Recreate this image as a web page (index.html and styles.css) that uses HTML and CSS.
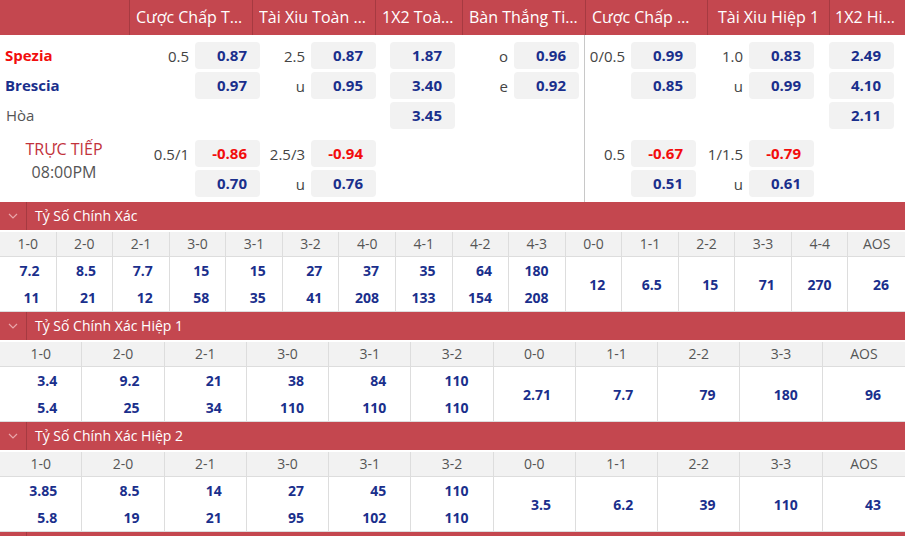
FILE: index.html
```html
<!DOCTYPE html>
<html lang="vi">
<head>
<meta charset="utf-8">
<title>Spezia vs Brescia</title>
<link rel="stylesheet" href="styles.css">
</head>
<body>
<div class="page">
  <div class="mhead">
    <div class="hc hc0"></div>
    <div class="hc hc1"><span>Cược Chấp Toàn Trận</span></div>
    <div class="hc hc2"><span>Tài Xiu Toàn Trận</span></div>
    <div class="hc hc3"><span>1X2 Toàn Trận</span></div>
    <div class="hc hc4"><span>Bàn Thắng Tiếp Theo</span></div>
    <div class="hc hc5"><span>Cược Chấp Hiệp 1</span></div>
    <div class="hc hc6"><span>Tài Xiu Hiệp 1</span></div>
    <div class="hc hc7"><span>1X2 Hiệp 1</span></div>
  </div>

  <div class="mbody">
    <div class="half left">
      <div class="team home">Spezia</div>
      <div class="cell g1"><span class="lbl">0.5</span><span class="odd">0.87</span></div>
      <div class="cell g2"><span class="lbl">2.5</span><span class="odd">0.87</span></div>
      <div class="cell g3"><span class="odd">1.87</span></div>
      <div class="cell g4"><span class="lbl">o</span><span class="odd">0.96</span></div>

      <div class="team away">Brescia</div>
      <div class="cell g1"><span class="odd">0.97</span></div>
      <div class="cell g2"><span class="lbl">u</span><span class="odd">0.95</span></div>
      <div class="cell g3"><span class="odd">3.40</span></div>
      <div class="cell g4"><span class="lbl">e</span><span class="odd">0.92</span></div>

      <div class="team draw">Hòa</div>
      <div class="cell g1"></div>
      <div class="cell g2"></div>
      <div class="cell g3"><span class="odd">3.45</span></div>
      <div class="cell g4"></div>

      <div class="live"><div class="livetag">TRỰC TIẾP</div><div class="livetime">08:00PM</div></div>
      <div class="cell g1 r4"><span class="lbl">0.5/1</span><span class="odd neg">-0.86</span></div>
      <div class="cell g2 r4"><span class="lbl">2.5/3</span><span class="odd neg">-0.94</span></div>
      <div class="cell g3 r4"></div>
      <div class="cell g4 r4"></div>

      <div class="cell g1"><span class="odd">0.70</span></div>
      <div class="cell g2"><span class="lbl">u</span><span class="odd">0.76</span></div>
      <div class="cell g3"></div>
      <div class="cell g4"></div>
    </div>

    <div class="half right">
      <div class="cell g5"><span class="lbl">0/0.5</span><span class="odd">0.99</span></div>
      <div class="cell g6"><span class="lbl">1.0</span><span class="odd">0.83</span></div>
      <div class="cell g7"><span class="odd">2.49</span></div>

      <div class="cell g5"><span class="odd">0.85</span></div>
      <div class="cell g6"><span class="lbl">u</span><span class="odd">0.99</span></div>
      <div class="cell g7"><span class="odd">4.10</span></div>

      <div class="cell g5"></div>
      <div class="cell g6"></div>
      <div class="cell g7"><span class="odd">2.11</span></div>

      <div class="cell g5 r4"><span class="lbl">0.5</span><span class="odd neg">-0.67</span></div>
      <div class="cell g6 r4"><span class="lbl">1/1.5</span><span class="odd neg">-0.79</span></div>
      <div class="cell g7 r4"></div>

      <div class="cell g5"><span class="odd">0.51</span></div>
      <div class="cell g6"><span class="lbl">u</span><span class="odd">0.61</span></div>
      <div class="cell g7"></div>
    </div>
  </div>

  <section class="sec">
    <div class="sechead"><span class="chev"><svg width="10" height="6" viewBox="0 0 10 6"><path d="M1 1 L5 5 L9 1" fill="none" stroke="#e9a7ab" stroke-width="1.2"/></svg></span><span class="sectitle">Tỷ Số Chính Xác</span></div>
    <div class="sgrid s16 shead">
      <div>1-0</div><div>2-0</div><div>2-1</div><div>3-0</div><div>3-1</div><div>3-2</div><div>4-0</div><div>4-1</div><div>4-2</div><div>4-3</div><div>0-0</div><div>1-1</div><div>2-2</div><div>3-3</div><div>4-4</div><div>AOS</div>
    </div>
    <div class="sgrid s16 svals">
      <div><span>7.2</span><span>11</span></div>
      <div><span>8.5</span><span>21</span></div>
      <div><span>7.7</span><span>12</span></div>
      <div><span>15</span><span>58</span></div>
      <div><span>15</span><span>35</span></div>
      <div><span>27</span><span>41</span></div>
      <div><span>37</span><span>208</span></div>
      <div><span>35</span><span>133</span></div>
      <div><span>64</span><span>154</span></div>
      <div><span>180</span><span>208</span></div>
      <div><span>12</span></div>
      <div><span>6.5</span></div>
      <div><span>15</span></div>
      <div><span>71</span></div>
      <div><span>270</span></div>
      <div><span>26</span></div>
    </div>
  </section>

  <section class="sec">
    <div class="sechead"><span class="chev"><svg width="10" height="6" viewBox="0 0 10 6"><path d="M1 1 L5 5 L9 1" fill="none" stroke="#e9a7ab" stroke-width="1.2"/></svg></span><span class="sectitle">Tỷ Số Chính Xác Hiệp 1</span></div>
    <div class="sgrid s11 shead">
      <div>1-0</div><div>2-0</div><div>2-1</div><div>3-0</div><div>3-1</div><div>3-2</div><div>0-0</div><div>1-1</div><div>2-2</div><div>3-3</div><div>AOS</div>
    </div>
    <div class="sgrid s11 svals">
      <div><span>3.4</span><span>5.4</span></div>
      <div><span>9.2</span><span>25</span></div>
      <div><span>21</span><span>34</span></div>
      <div><span>38</span><span>110</span></div>
      <div><span>84</span><span>110</span></div>
      <div><span>110</span><span>110</span></div>
      <div><span>2.71</span></div>
      <div><span>7.7</span></div>
      <div><span>79</span></div>
      <div><span>180</span></div>
      <div><span>96</span></div>
    </div>
  </section>

  <section class="sec">
    <div class="sechead"><span class="chev"><svg width="10" height="6" viewBox="0 0 10 6"><path d="M1 1 L5 5 L9 1" fill="none" stroke="#e9a7ab" stroke-width="1.2"/></svg></span><span class="sectitle">Tỷ Số Chính Xác Hiệp 2</span></div>
    <div class="sgrid s11 shead">
      <div>1-0</div><div>2-0</div><div>2-1</div><div>3-0</div><div>3-1</div><div>3-2</div><div>0-0</div><div>1-1</div><div>2-2</div><div>3-3</div><div>AOS</div>
    </div>
    <div class="sgrid s11 svals">
      <div><span>3.85</span><span>5.8</span></div>
      <div><span>8.5</span><span>19</span></div>
      <div><span>14</span><span>21</span></div>
      <div><span>27</span><span>95</span></div>
      <div><span>45</span><span>102</span></div>
      <div><span>110</span><span>110</span></div>
      <div><span>3.5</span></div>
      <div><span>6.2</span></div>
      <div><span>39</span></div>
      <div><span>110</span></div>
      <div><span>43</span></div>
    </div>
  </section>

  <section class="sec">
    <div class="sechead"><span class="chev"></span><span class="sectitle"></span></div>
  </section>
</div>
</body>
</html>
```

FILE: styles.css
```css
* { box-sizing: border-box; }
html, body { margin: 0; padding: 0; background: #fff; }
body {
  width: 905px;
  height: 536px;
  overflow: hidden;
  font-family: "Open Sans", "Noto Sans", "DejaVu Sans", sans-serif;
  color: #444;
}
.page { width: 905px; }

/* market header */
.mhead {
  display: grid;
  grid-template-columns: 130px 123px 123px 87px 123px 122px 122px 1fr;
  height: 35px;
  background: #c4474f;
}
.hc {
  border-right: 1px solid #a63a41;
  color: #fff;
  font-size: 16px;
  line-height: 35px;
  padding: 0 6px;
  text-align: center;
  overflow: hidden;
  white-space: nowrap;
}
.hc span {
  display: block;
  overflow: hidden;
  text-overflow: ellipsis;
  white-space: nowrap;
}
.hc7 { border-right: 0; padding: 0 3px 0 5px; }

/* match body */
.mbody {
  display: flex;
  height: 167px;
}
.half {
  display: grid;
  grid-template-rows: 27px 27px 27px 35px 27px;
  row-gap: 3px;
  align-content: start;
  padding-top: 7px;
}
.half > .r4 { align-self: end; height: 27px; }
.left {
  width: 585px;
  border-right: 1px solid #c8c8c8;
  grid-template-columns: 130px 130px 116px 79px 124px;
}
.right {
  flex: 1;
  grid-template-columns: 111px 118px 80px;
}
.cell {
  display: flex;
  justify-content: flex-end;
  align-items: center;
  gap: 6px;
}
.lbl {
  font-size: 15px;
  color: #444;
  white-space: nowrap;
}
.odd {
  width: 65px;
  height: 27px;
  line-height: 27px;
  background: #f2f2f2;
  border-radius: 4px;
  text-align: right;
  padding-right: 13px;
  font-size: 15px;
  font-weight: 700;
  color: #1a2f8c;
}
.odd.neg { color: #f20d0d; }
.team {
  font-size: 15px;
  line-height: 27px;
  padding-left: 5px;
  font-weight: 700;
}
.team.home { color: #f20d0d; }
.team.away { color: #1a2f8c; }
.team.draw { font-weight: 400; color: #555; padding-left: 6px; }
.live {
  grid-row: 4 / span 2;
  margin-top: 6px;
  text-align: center;
  font-size: 16px;
  line-height: 23px;
  padding-right: 2px;
}
.livetag { color: #c2323b; }
.livetime { color: #555; }

/* sections */
.sec { width: 905px; }
.sechead {
  display: flex;
  height: 28px;
  background: #c4474f;
  margin-bottom: 2px;
}
.chev {
  width: 27px;
  border-right: 1px solid #a63a41;
  display: flex;
  align-items: center;
  justify-content: center;
}
.chev svg { display: block; }
.sectitle {
  color: #fff;
  font-size: 14px;
  line-height: 28px;
  padding-left: 8px;
}
.sgrid { display: grid; }
.s16 { grid-template-columns: repeat(16, 1fr); }
.s11 { grid-template-columns: repeat(11, 1fr); }
.shead {
  background: #f2f2f2;
  height: 25px;
  border-bottom: 1px solid #dddddd;
}
.shead > div {
  border-right: 1px solid #dddddd;
  text-align: center;
  font-size: 14px;
  line-height: 24px;
  color: #555;
}
.svals {
  height: 55px;
  border-bottom: 1px solid #dddddd;
}
.svals > div {
  border-right: 1px solid #dddddd;
  display: flex;
  flex-direction: column;
  justify-content: center;
  align-items: flex-end;
  padding-right: 16px;
}
.s11.svals > div { padding-right: 24px; }
.sgrid > div:last-child { border-right: 0; }
.svals span {
  font-size: 14px;
  font-weight: 700;
  line-height: 27px;
  color: #1a2f8c;
}
```
